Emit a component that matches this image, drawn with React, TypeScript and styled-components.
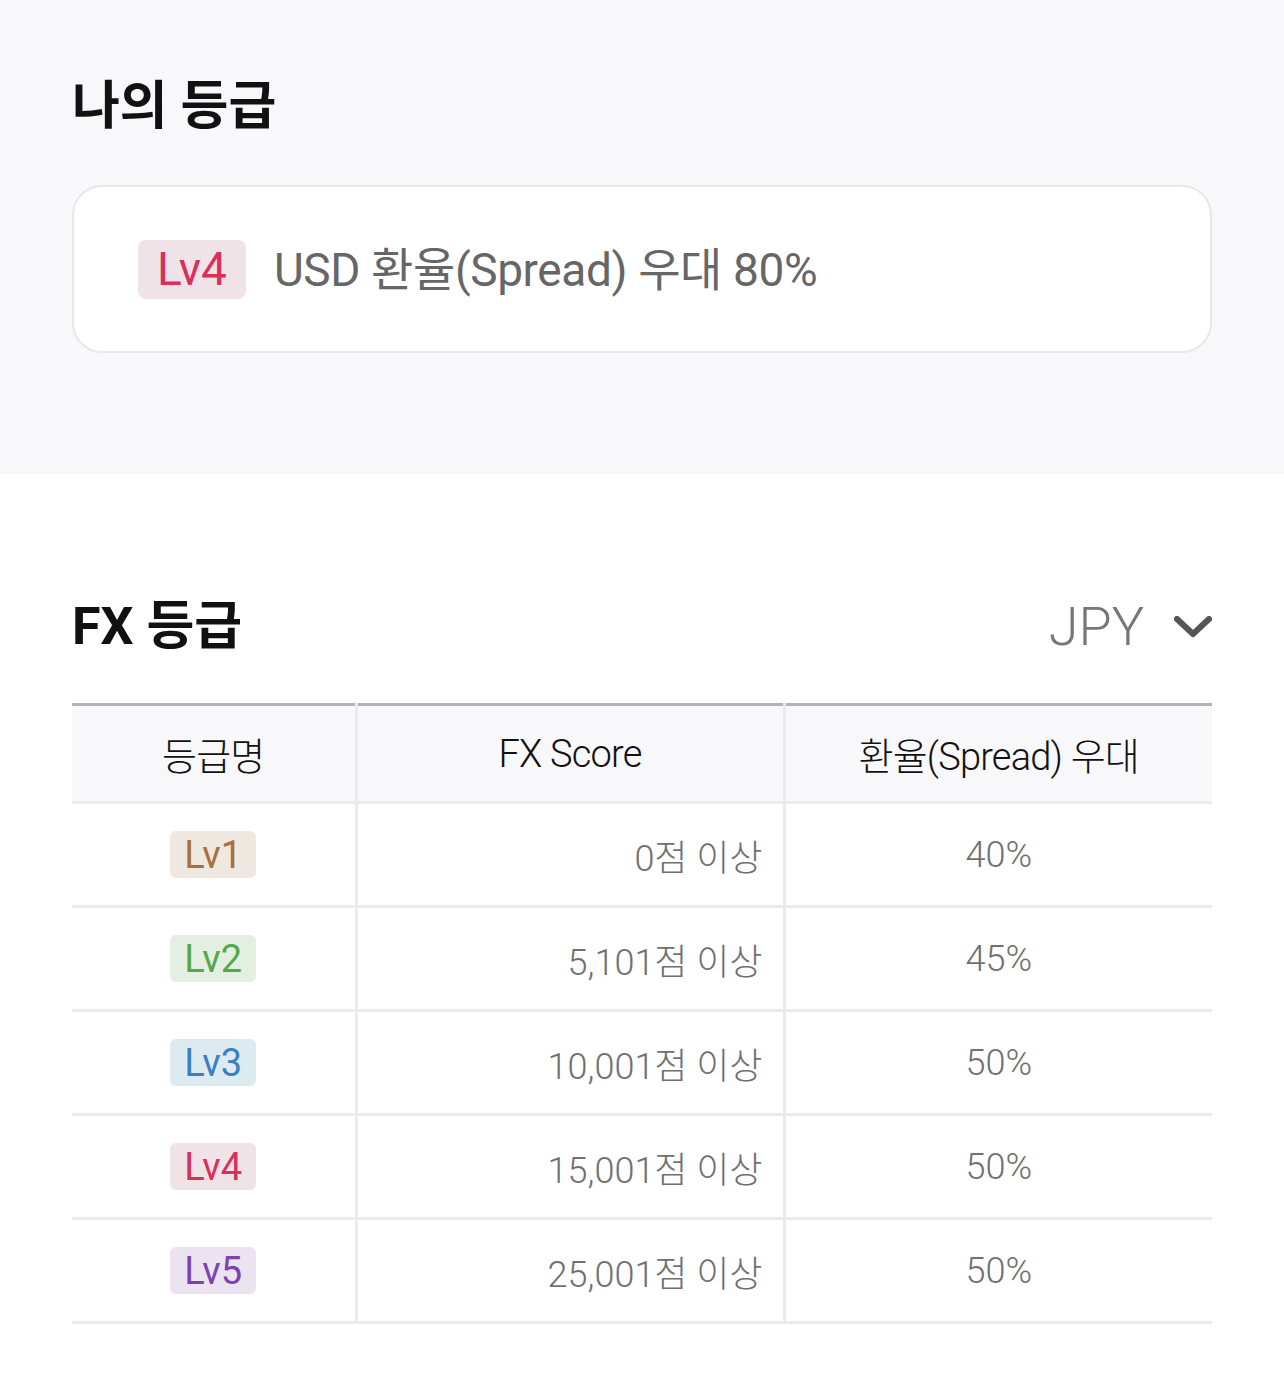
import styled, { createGlobalStyle } from "styled-components";

const GlobalStyle = createGlobalStyle`
  html, body {
    margin: 0;
    padding: 0;
    background: #ffffff;
  }
  body {
    font-family: Roboto, "Noto Sans CJK KR", sans-serif;
  }
`;

type Level = 1 | 2 | 3 | 4 | 5;

const levelColors: Record<Level, { fg: string; bg: string }> = {
  1: { fg: "#a8703e", bg: "#efe8e1" },
  2: { fg: "#55a847", bg: "#e2efe1" },
  3: { fg: "#3b7fc4", bg: "#dcebf0" },
  4: { fg: "#d92f5b", bg: "#f0e3e8" },
  5: { fg: "#7a44b0", bg: "#ebe3f0" },
};

const Page = styled.div`
  width: 1284px;
  min-height: 1390px;
  background: #fff;
`;

const MySection = styled.section`
  background: #f8f8fa;
  padding: 78px 72px 121px;
`;

const Title = styled.h2`
  margin: 0;
  font-family: Roboto, "Noto Sans CJK KR", sans-serif;
  font-size: 52px;
  font-weight: 700;
  line-height: 58px;
  color: #111;
`;

const Card = styled.div`
  margin-top: 49px;
  height: 168px;
  box-sizing: border-box;
  border: 2px solid #e8e8ea;
  border-radius: 30px;
  background: #fff;
  display: flex;
  align-items: center;
  padding-left: 64px;
  gap: 28px;
`;

const Badge = styled.span<{ $level: Level; $big?: boolean }>`
  display: inline-flex;
  align-items: center;
  justify-content: center;
  box-sizing: border-box;
  height: ${(p) => (p.$big ? "59px" : "47px")};
  padding: 0 ${(p) => (p.$big ? "19px" : "14px")};
  border-radius: ${(p) => (p.$big ? "8px" : "6px")};
  font-family: Roboto, sans-serif;
  font-size: ${(p) => (p.$big ? "46px" : "38px")};
  font-weight: 400;
  color: ${(p) => levelColors[p.$level].fg};
  background: ${(p) => levelColors[p.$level].bg};
`;

const CardText = styled.span`
  font-size: 46px;
  line-height: 54px;
  padding-top: 2px;
  color: #666;
  letter-spacing: -0.4px;
`;

const GradeSection = styled.section`
  padding: 121px 72px 60px;
`;

const TitleRow = styled.div`
  display: flex;
  align-items: center;
  justify-content: space-between;
`;

const CurrencySelect = styled.button`
  display: flex;
  align-items: center;
  gap: 30px;
  border: none;
  background: none;
  padding: 0;
  font-family: Roboto, sans-serif;
  font-size: 54px;
  font-weight: 300;
  color: #777;
  cursor: pointer;
`;

const Table = styled.table`
  width: 100%;
  margin-top: 45px;
  border-collapse: collapse;
  table-layout: fixed;
  border-top: 3px solid #b3b3b3;
`;

const HeadCell = styled.th`
  height: 95px;
  padding: 0;
  background: #f8f8fa;
  font-family: Roboto, "Noto Sans CJK KR", sans-serif;
  font-size: 38px;
  font-weight: 300;
  color: #111;
  letter-spacing: -0.8px;
  text-align: center;
  border-bottom: 3px solid #ebebeb;
  & + & {
    border-left: 3px solid #ebebeb;
  }
`;

const Cell = styled.td<{ $align?: "center" | "right" }>`
  height: 101px;
  padding: 0 ${(p) => (p.$align === "right" ? "20px" : "0")};
  text-align: ${(p) => p.$align ?? "center"};
  font-family: Roboto, "Noto Sans CJK KR", sans-serif;
  font-size: 36px;
  font-weight: 300;
  color: #707070;
  border-bottom: 3px solid #ebebeb;
  & + & {
    border-left: 3px solid #ebebeb;
  }
`;

const Chevron = () => (
  <svg width="38" height="22" viewBox="0 0 38 22" fill="none">
    <path d="M3 3 L19 18 L35 3" stroke="#555" strokeWidth="6" strokeLinecap="round" strokeLinejoin="round" />
  </svg>
);

const grades: { level: Level; score: string; rate: string }[] = [
  { level: 1, score: "0점 이상", rate: "40%" },
  { level: 2, score: "5,101점 이상", rate: "45%" },
  { level: 3, score: "10,001점 이상", rate: "50%" },
  { level: 4, score: "15,001점 이상", rate: "50%" },
  { level: 5, score: "25,001점 이상", rate: "50%" },
];

export default function App() {
  return (
    <Page>
      <GlobalStyle />
      <MySection>
        <Title>나의 등급</Title>
        <Card>
          <Badge $level={4} $big>Lv4</Badge>
          <CardText>USD 환율(Spread) 우대 80%</CardText>
        </Card>
      </MySection>

      <GradeSection>
        <TitleRow>
          <Title>FX 등급</Title>
          <CurrencySelect>
            JPY
            <Chevron />
          </CurrencySelect>
        </TitleRow>

        <Table>
          <colgroup>
            <col style={{ width: "284px" }} />
            <col />
            <col />
          </colgroup>
          <thead>
            <tr>
              <HeadCell>등급명</HeadCell>
              <HeadCell>FX Score</HeadCell>
              <HeadCell>환율(Spread) 우대</HeadCell>
            </tr>
          </thead>
          <tbody>
            {grades.map((g) => (
              <tr key={g.level}>
                <Cell>
                  <Badge $level={g.level}>Lv{g.level}</Badge>
                </Cell>
                <Cell $align="right">{g.score}</Cell>
                <Cell>{g.rate}</Cell>
              </tr>
            ))}
          </tbody>
        </Table>
      </GradeSection>
    </Page>
  );
}
